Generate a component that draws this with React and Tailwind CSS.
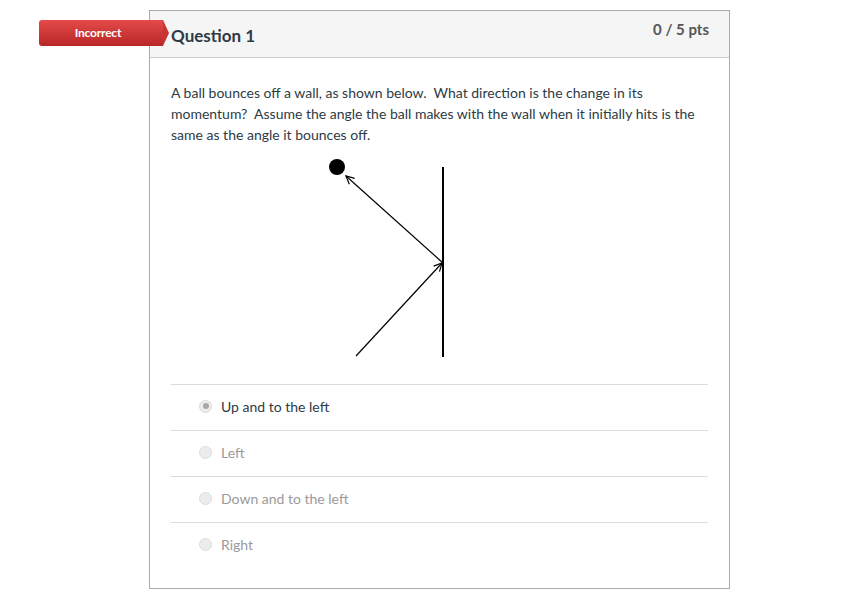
import React from 'react';

const answers = [
  { label: 'Up and to the left', selected: true },
  { label: 'Left' },
  { label: 'Down and to the left' },
  { label: 'Right' },
];

const Radio = ({ selected }) => (
  <span className="w-[13px] h-[13px] rounded-full border border-[#dcdcdc] bg-[#ececec] flex items-center justify-center">
    {selected && <span className="w-[6px] h-[6px] rounded-full bg-[#a8a8a8]" />}
  </span>
);

// bounce diagram
const Diagram = () => (
  <svg width="150" height="215" viewBox="0 0 150 215" className="block">
    <defs>
      <marker id="arr" markerWidth="10" markerHeight="10" refX="9" refY="5" orient="auto" markerUnits="userSpaceOnUse">
        <path d="M1 1 L9 5 L1 9" fill="none" stroke="#000" strokeWidth="1.2" />
      </marker>
    </defs>
    <circle cx="27" cy="12" r="8" fill="#000" />
    <line x1="133" y1="12" x2="133" y2="202" stroke="#000" strokeWidth="2" />
    <line x1="133" y1="108" x2="36" y2="21" stroke="#000" strokeWidth="1.2" markerEnd="url(#arr)" />
    <line x1="46" y1="201" x2="132" y2="108" stroke="#000" strokeWidth="1.2" markerEnd="url(#arr)" />
  </svg>
);

export default function App() {
  return (
    <div className="relative bg-white min-h-[606px] pt-[10px] font-['Lato','Liberation_Sans',sans-serif]">
      <div className="absolute left-[39px] top-[20px] flex items-center">
        <div className="h-[26px] w-[124px] rounded-l-[3px] bg-gradient-to-b from-[#e54a4a] to-[#b82626] flex items-center justify-center pr-[6px] text-white text-[12px] font-bold tracking-[-0.2px]">
          Incorrect
        </div>
        <div className="w-0 h-0 border-y-[13px] border-y-transparent border-l-[6px] border-l-[#c83535]" />
      </div>

      <div className="ml-[149px] w-[581px] h-[579px] border border-[#aaaaaa]">
        <div className="h-[47px] bg-[#f5f5f5] border-b border-[#c7cdd1] flex justify-between pl-[21px] pr-[20px]">
          <div className="pt-[13px] text-[17px] font-bold text-[#2d3b45] leading-[24px]">Question 1</div>
          <div className="pt-[8px] text-[15px] font-bold text-[#555] leading-[20px]">0 / 5 pts</div>
        </div>

        <div className="px-[21px] pt-[24px]">
          <p className="text-[14px] leading-[21px] text-[#2d3b45]">
            A ball bounces off a wall, as shown below.&nbsp; What direction is the change in its momentum?&nbsp; Assume the angle the ball makes with the wall when it initially hits is the same as the angle it bounces off.
          </p>
          <div className="mt-[10px] ml-[139px]">
            <Diagram />
          </div>

          <div className="mt-[14px]">
            {answers.map((a) => (
              <div key={a.label} className="h-[46px] border-t border-[#dcdcdc] flex items-center pb-[3px] pl-[28px] gap-[9px]">
                <Radio selected={a.selected} />
                <span className={`text-[14px] ${a.selected ? 'text-[#2d3b45]' : 'text-[#9a9a9a]'}`}>{a.label}</span>
              </div>
            ))}
          </div>
        </div>
      </div>
    </div>
  );
}
